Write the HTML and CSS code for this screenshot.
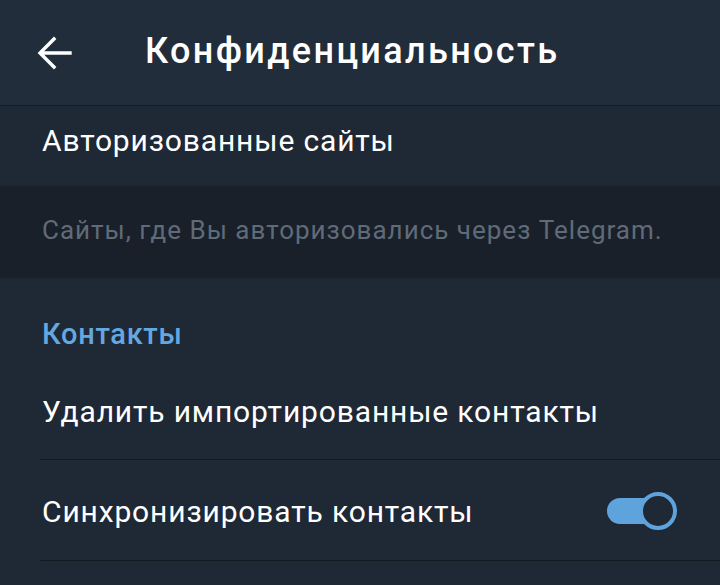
FILE: index.html
```html
<!DOCTYPE html>
<html lang="ru">
<head>
<meta charset="utf-8">
<link rel="stylesheet" href="styles.css">
</head>
<body>
<div class="app">
  <header class="topbar">
    <svg class="back" width="36" height="36" viewBox="0 0 36 36" aria-hidden="true">
      <path d="M33 18H4M17 4L3 18l14 14" fill="none" stroke="#fff" stroke-width="3.4" stroke-linecap="square"/>
    </svg>
    <h1 class="title">Конфиденциальность</h1>
  </header>
  <div class="row row-first"><span class="row-text">Авторизованные сайты</span></div>
  <div class="hint"><span>Сайты, где Вы авторизовались через Telegram.</span></div>
  <section class="section">
    <div class="section-title">Контакты</div>
    <div class="row row-divided"><span class="row-text">Удалить импортированные контакты</span></div>
    <div class="row row-divided row-toggle">
      <span class="row-text">Синхронизировать контакты</span>
      <span class="switch"><span class="track"></span><span class="knob"></span></span>
    </div>
  </section>
</div>
</body>
</html>
```
FILE: styles.css
```css
* { box-sizing: border-box; margin: 0; padding: 0; }
html, body { width: 720px; height: 585px; overflow: hidden; }
body {
  background: #1f2835;
  font-family: Roboto, "Noto Sans", sans-serif;
  color: #ffffff;
}
.app { display: flex; flex-direction: column; }
.topbar {
  height: 106px;
  background: #222d3c;
  display: flex;
  align-items: center;
  padding-left: 37px;
  border-bottom: 1px solid #161c25;
}
.back { flex: none; margin-top: 1px; }
.title {
  margin-left: 72px;
  margin-top: -3px;
  font-size: 36px;
  font-weight: 500;
  letter-spacing: 2.35px;
  color: #ffffff;
}
.row {
  display: flex;
  align-items: center;
  padding-left: 42px;
  padding-right: 43px;
}
.row-text { font-size: 30px; font-weight: 400; letter-spacing: 0.85px; color: #ffffff; }
.row-first { height: 80px; background: #1f2835; padding-bottom: 12px; }
.hint {
  height: 92px;
  background: #19202a;
  display: flex;
  align-items: center;
  padding-left: 42px;
  font-size: 26px;
  letter-spacing: 1px;
  color: #606b79;
  padding-bottom: 5px;
}
.section { background: #1f2835; }
.section-title {
  height: 81px;
  display: flex;
  align-items: center;
  padding-left: 42px;
  padding-top: 30px;
  font-size: 29px;
  font-weight: 500;
  letter-spacing: 0.7px;
  color: #64a8e0;
}
.row-divided {
  height: 101px;
  margin-left: 40px;
  padding-left: 2px;
  border-bottom: 1px solid #121820;
  padding-top: 4px;
}
.row-toggle { justify-content: space-between; padding-top: 2px; }
.switch {
  position: relative;
  width: 70px;
  height: 38px;
  flex: none;
}
.track {
  position: absolute;
  left: 0;
  top: 6px;
  width: 60px;
  height: 26px;
  border-radius: 13px;
  background: #5ea3db;
}
.knob {
  position: absolute;
  right: 0;
  top: 0;
  width: 38px;
  height: 38px;
  border-radius: 50%;
  background: #1f2835;
  border: 4px solid #5ea3db;
}
```
